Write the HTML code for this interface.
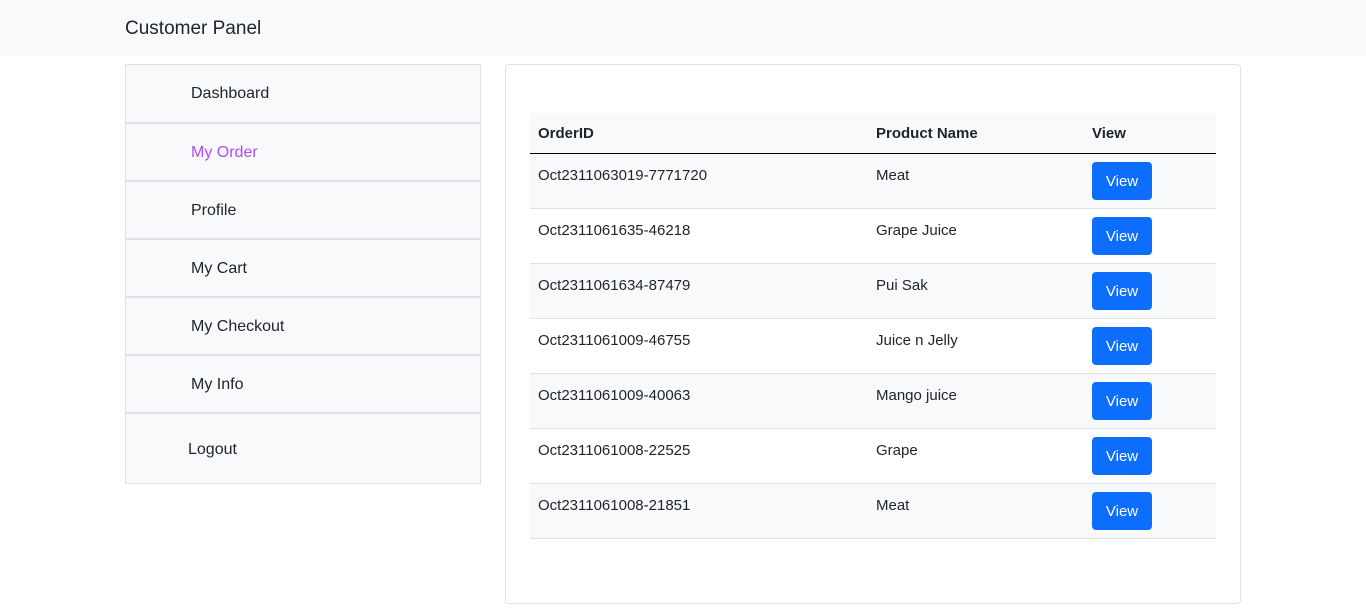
<!DOCTYPE html>
<html><head><style>
body{margin:0;font-family:"Liberation Sans",sans-serif;font-size:16px;color:#212529;background:#fff;}
.nav{height:56px;background:#f8f9fa;position:relative}
.brand{position:absolute;left:125px;top:18px;font-size:19px;color:#212529}
.side{position:absolute;left:125px;top:64px;width:356px;}
.item{box-sizing:border-box;height:58px;border:1px solid #dee2e6;border-bottom:none;background:#f8f9fa;padding-left:65px;line-height:58px;}
.item+.item{border-top:2px solid #dee2e6;}
.item.last{height:72px;line-height:72px;padding-left:62px;border-bottom:1px solid #dee2e6}
.card{position:absolute;left:505px;top:64px;width:736px;height:540px;box-sizing:border-box;border:1px solid #dee2e6;border-radius:4px}
table{position:absolute;left:24px;top:48px;width:686px;border-collapse:collapse}
th{text-align:left;font-weight:bold;height:40px;padding:0 8px;background:#f8f9fa;border-bottom:1px solid #000;font-size:15px}
td{height:54px;padding:0 8px;vertical-align:top;border-bottom:1px solid #dee2e6;font-size:15px}
td span{display:block;padding-top:13px}
tr:nth-child(odd) td{background:#f8f9fa}
.btn{display:inline-block;margin-top:8px;background:#0d6efd;color:#fff;border-radius:4px;width:60px;height:38px;line-height:40px;text-align:center;font-size:15px}
</style></head><body>
<div class="nav"><div class="brand">Customer Panel</div></div>
<div class="side">
<div class="item">Dashboard</div>
<div class="item" style="color:#b44cf5">My Order</div>
<div class="item">Profile</div>
<div class="item">My Cart</div>
<div class="item">My Checkout</div>
<div class="item">My Info</div>
<div class="item last">Logout</div>
</div>
<div class="card">
<table>
<thead><tr><th style="width:322px">OrderID</th><th style="width:200px">Product Name</th><th>View</th></tr></thead>
<tbody>
<tr><td><span>Oct2311063019-7771720</span></td><td><span>Meat</span></td><td><div class="btn">View</div></td></tr>
<tr><td><span>Oct2311061635-46218</span></td><td><span>Grape Juice</span></td><td><div class="btn">View</div></td></tr>
<tr><td><span>Oct2311061634-87479</span></td><td><span>Pui Sak</span></td><td><div class="btn">View</div></td></tr>
<tr><td><span>Oct2311061009-46755</span></td><td><span>Juice n Jelly</span></td><td><div class="btn">View</div></td></tr>
<tr><td><span>Oct2311061009-40063</span></td><td><span>Mango juice</span></td><td><div class="btn">View</div></td></tr>
<tr><td><span>Oct2311061008-22525</span></td><td><span>Grape</span></td><td><div class="btn">View</div></td></tr>
<tr><td><span>Oct2311061008-21851</span></td><td><span>Meat</span></td><td><div class="btn">View</div></td></tr>
</tbody></table>
</div>
</body></html>
